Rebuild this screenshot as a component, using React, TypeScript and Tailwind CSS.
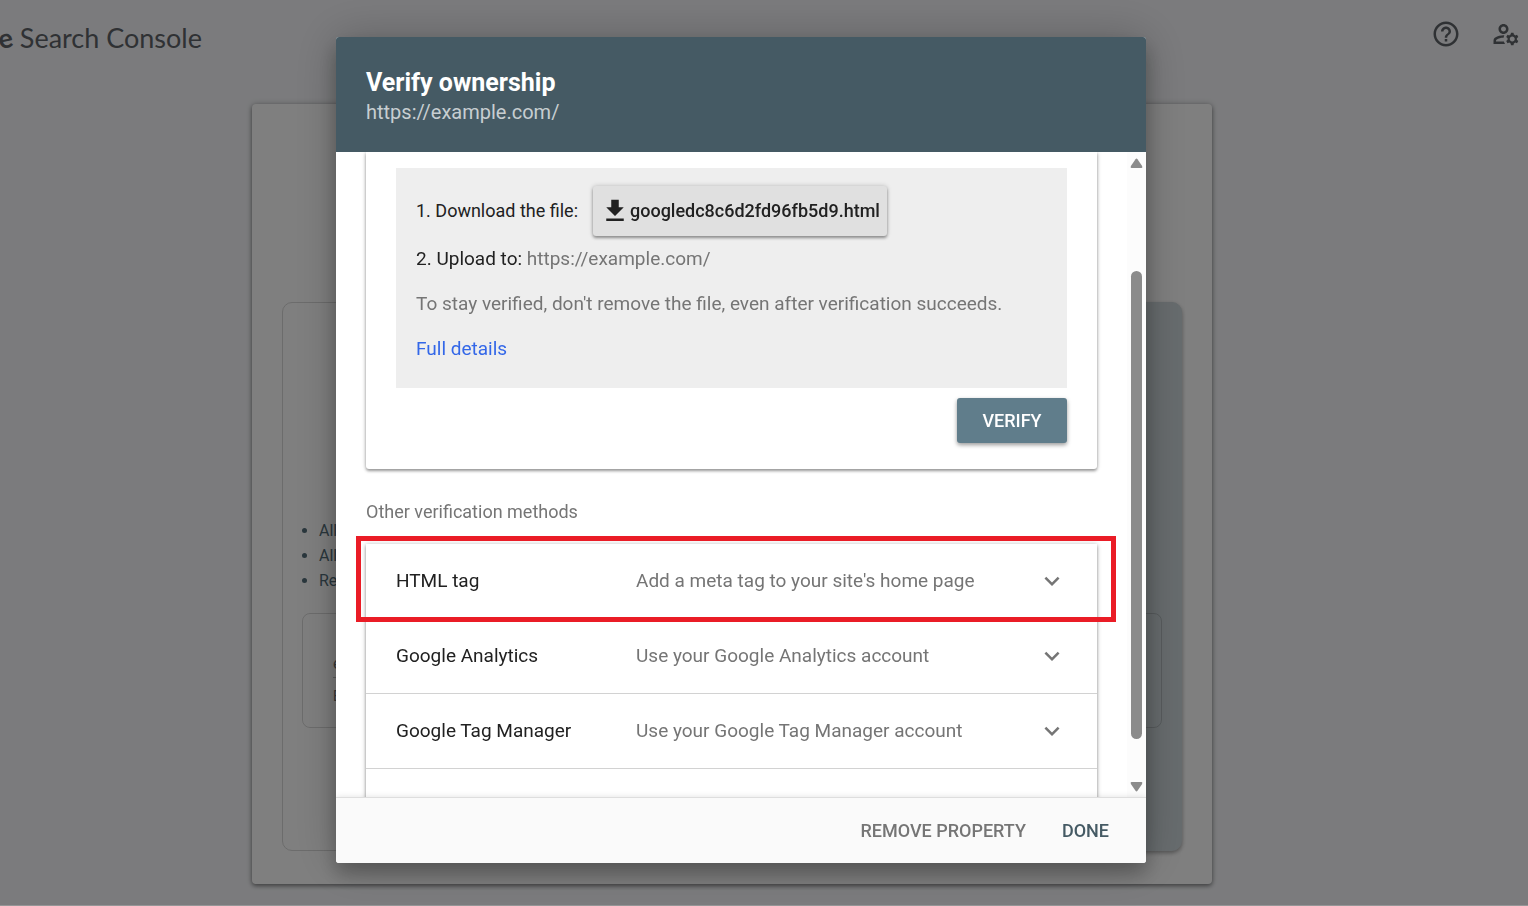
import {
  MdGetApp,
  MdHelpOutline,
  MdKeyboardArrowDown,
  MdOutlineManageAccounts,
} from "react-icons/md";

const methods = [
  { name: "HTML tag", desc: "Add a meta tag to your site's home page", highlighted: true },
  { name: "Google Analytics", desc: "Use your Google Analytics account" },
  { name: "Google Tag Manager", desc: "Use your Google Tag Manager account" },
];

const domainNotes = ["All URLs", "All URLs", "Requires"];

function PropertyPanel({ notes = [], id, placeholder, hint, selected = false }: {
  notes?: string[];
  id: string;
  placeholder: string;
  hint: string;
  selected?: boolean;
}) {
  return (
    <div
      className={`flex-1 rounded-[10px] border px-[19px] pt-[215px] pb-[122px] ${
        selected ? "border-[#cfd8dc] bg-[#cfd8dc] shadow-[0_2px_4px_rgba(0,0,0,0.35)]" : "border-[#d8d8d8]"
      }`}
    >
      <ul className="min-h-[75px] list-disc pl-[17px] text-base leading-[25px] whitespace-nowrap text-[#546e7a]">
        {notes.map((n, i) => (
          <li key={i}>{n}</li>
        ))}
      </ul>
      <div className="mt-5 h-[115px] rounded-lg border border-black/15 px-[30px] pt-[35px]">
        <input
          id={id}
          placeholder={placeholder}
          className="block h-[29px] w-full border-b border-[#c0c0c0] bg-transparent text-base placeholder:text-[#757575]"
        />
        <label htmlFor={id} className="block pt-2 text-sm leading-5 text-[#757575]">{hint}</label>
      </div>
    </div>
  );
}

function Background() {
  return (
    <div className="h-screen overflow-hidden bg-[#f6f7fa]">
      <header className="flex h-[104px] items-start justify-between pr-[7px]">
        <div className="flex w-[202px] justify-end gap-[7px] overflow-hidden pt-[21px] font-['Lato'] text-[27px] leading-[34px] whitespace-nowrap text-[#5f6368]">
          <span className="-rotate-12 font-bold">e</span>
          <span>Search Console</span>
        </div>
        <div className="flex gap-[30px] pt-[19px] text-[30px] text-[#5f6368]">
          <button aria-label="Help"><MdHelpOutline /></button>
          <button aria-label="User settings"><MdOutlineManageAccounts /></button>
        </div>
      </header>
      <div className="pr-16">
        <main className="mx-auto flex max-w-[960px] gap-6 rounded bg-white px-[30px] pt-[198px] pb-[33px] shadow-[0_2px_4px_rgba(0,0,0,0.4),0_0_6px_rgba(0,0,0,0.2)]">
          <PropertyPanel notes={domainNotes} id="domain" placeholder="example.com" hint="Enter domain" />
          <PropertyPanel id="prefix" placeholder="https://" hint="Enter URL" selected />
        </main>
      </div>
    </div>
  );
}

function FileMethod() {
  return (
    <section className="rounded-b-[3px] px-[30px] pt-4 pb-[26px] shadow-[0_2px_3px_rgba(0,0,0,0.35),0_0_5px_rgba(0,0,0,0.2)]">
      <div className="bg-[#eeeeee] px-5 pt-[18px] pb-[17px] text-[19px] leading-[45px] text-[#757575]">
        <div className="flex h-[50px] items-center text-lg text-[#212121]">
          1. Download the file:
          <button className="ml-[15px] flex h-[50px] items-center rounded-[3px] bg-[#e0e0e0] px-[7px] font-medium shadow-[0_2px_3px_rgba(0,0,0,0.35),0_0_5px_rgba(0,0,0,0.2)]">
            <MdGetApp className="size-[30px]" />
            googledc8c6d2fd96fb5d9.html
          </button>
        </div>
        <p><span className="text-[#212121]">2. Upload to:</span> https://example.com/</p>
        <p>To stay verified, don't remove the file, even after verification succeeds.</p>
        <a href="#details" className="block text-[#3367e8]">Full details</a>
      </div>
      <div className="flex justify-end pt-[10px]">
        <button className="h-[45px] w-[110px] rounded-[3px] bg-[#607d8b] text-lg font-medium text-white shadow-[0_2px_4px_rgba(0,0,0,0.4)]">
          VERIFY
        </button>
      </div>
    </section>
  );
}

function Scrollbar() {
  return (
    <div className="flex w-[19px] flex-col items-center bg-[#fcfcfc] pt-[6px] pb-[5px] text-[#8b8b8b]">
      <svg viewBox="0 0 12 10" className="h-[10px] w-[13px]" fill="currentColor">
        <path d="M5 1.2Q6 0 7 1.2L11.6 8Q12.4 10 11 10H1Q-.4 10 .4 8Z" />
      </svg>
      <div className="mt-[103px] mb-[43px] w-[11px] flex-1 rounded-full bg-[#8b8b8b]" />
      <svg viewBox="0 0 12 10" className="h-[10px] w-[13px]" fill="currentColor">
        <path d="M5 8.8Q6 10 7 8.8L11.6 2Q12.4 0 11 0H1Q-.4 0 .4 2Z" />
      </svg>
    </div>
  );
}

export default function App() {
  return (
    <div className="font-['Roboto',sans-serif]">
      <Background />
      <div className="fixed inset-0 flex justify-center border-b border-white/20 bg-black/50 pt-[37px] pr-[46px] pb-[42px]">
        <div
          role="dialog"
          aria-labelledby="dialog-title"
          className="flex w-full max-w-[810px] flex-col overflow-hidden rounded-[3px] bg-white shadow-[0_11px_19px_rgba(0,0,0,0.25),0_0_45px_rgba(0,0,0,0.22)]"
        >
          <header className="bg-[#455a64] px-[30px] pt-[30px] pb-[27px]">
            <h1 id="dialog-title" className="text-[25px] leading-8 font-bold text-white">Verify ownership</h1>
            <p className="text-xl leading-[26px] text-[#c7ced1]">https://example.com/</p>
          </header>

          <div className="flex min-h-0 flex-1">
            <div className="min-w-0 flex-1 overflow-hidden px-[30px]">
              <FileMethod />
              <h2 className="pt-[30px] pb-5 text-lg leading-[25px] text-[#757575]">Other verification methods</h2>
              <div className="shadow-[0_2px_3px_rgba(0,0,0,0.35),0_0_5px_rgba(0,0,0,0.2)]">
                {methods.map((m) => (
                  <button
                    key={m.name}
                    className="relative flex h-[75px] w-full items-center border-b border-[#d2d2d2] px-[30px] text-left text-[19px] leading-[30px] text-[#757575]"
                  >
                    <span className="w-[240px] text-[#212121]">{m.name}</span>
                    <span className="flex-1">{m.desc}</span>
                    <MdKeyboardArrowDown className="size-[30px]" />
                    {m.highlighted && (
                      <span className="absolute -top-2 -right-[19px] -bottom-1 -left-[10px] border-[5px] border-[#ea1c26]" />
                    )}
                  </button>
                ))}
                <div className="h-[75px]" />
              </div>
            </div>
            <Scrollbar />
          </div>

          <footer className="flex h-[66px] items-center justify-end gap-9 border-t border-[#dedede] bg-[#fafafa] px-[37px] text-lg font-medium shadow-[0_0_6px_rgba(0,0,0,0.12)]">
            <button className="text-[#757575]">REMOVE PROPERTY</button>
            <button className="text-[#455a64]">DONE</button>
          </footer>
        </div>
      </div>
    </div>
  );
}
